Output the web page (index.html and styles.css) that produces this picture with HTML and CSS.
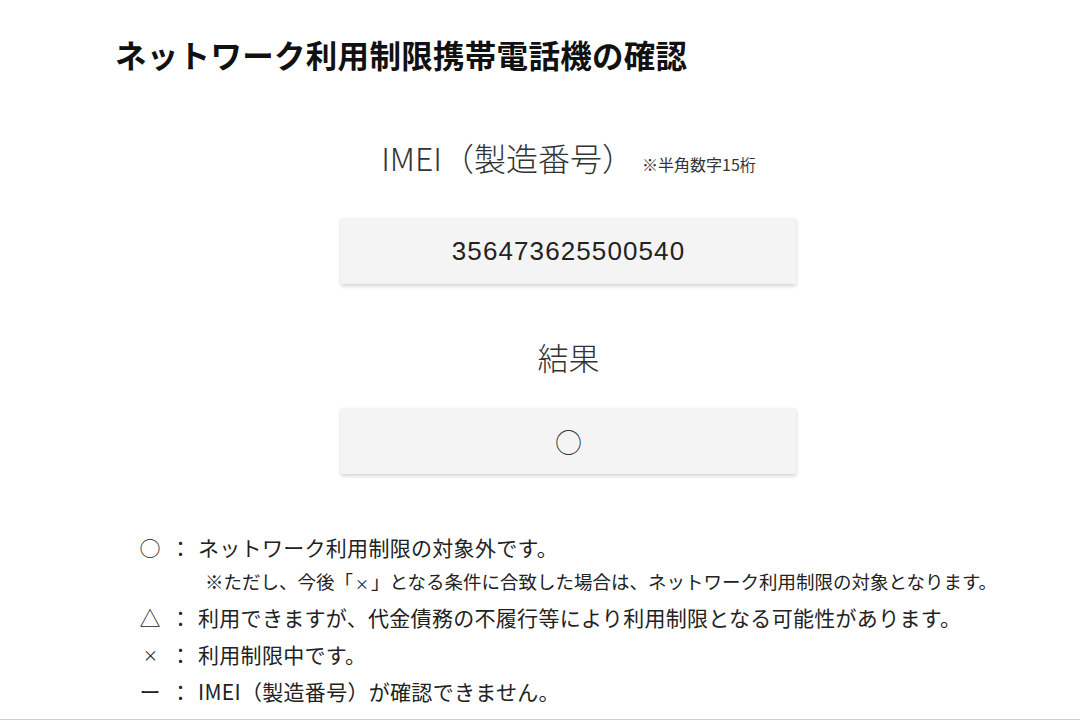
FILE: index.html
```html
<!DOCTYPE html>
<html lang="ja">
<head>
    <meta charset="UTF-8">
    <meta name="viewport" content="width=device-width, initial-scale=1.0">
    <title>ネットワーク利用制限携帯電話機の確認</title>
    <link rel="stylesheet" href="styles.css">
</head>
<body>
<div class="page">
    <h1 class="page-title">ネットワーク利用制限携帯電話機の確認</h1>

    <div class="check-area">
        <h2 class="field-label">IMEI（製造番号）<span class="field-note">※半角数字15桁</span></h2>
        <div class="field-box">356473625500540</div>

        <h2 class="field-label result-label">結果</h2>
        <div class="field-box result-box">○</div>
    </div>

    <ul class="legend">
        <li class="legend-row">
            <span class="legend-mark">○</span>
            <span class="legend-colon">：</span>
            <span class="legend-text">ネットワーク利用制限の対象外です。</span>
        </li>
        <li class="legend-note">※ただし、今後「<span class="small-cross">×</span>」となる条件に合致した場合は、ネットワーク利用制限の対象となります。</li>
        <li class="legend-row">
            <span class="legend-mark">△</span>
            <span class="legend-colon">：</span>
            <span class="legend-text">利用できますが、代金債務の不履行等により利用制限となる可能性があります。</span>
        </li>
        <li class="legend-row">
            <span class="legend-mark legend-mark-small">×</span>
            <span class="legend-colon">：</span>
            <span class="legend-text">利用制限中です。</span>
        </li>
        <li class="legend-row">
            <span class="legend-mark">ー</span>
            <span class="legend-colon">：</span>
            <span class="legend-text">IMEI（製造番号）が確認できません。</span>
        </li>
    </ul>
</div>
<div class="page-rule"></div>
</body>
</html>
```

FILE: styles.css
```css
/* Reset page CSS */
* {
    margin: 0;
    padding: 0;
    box-sizing: border-box;
}

body {
    font-family: "Noto Sans CJK JP", "Noto Sans", sans-serif;
    color: #222;
    background-color: #ffffff;
    overflow: hidden;
}

.page {
    padding: 34px 58px 0 115px;
}

.page-title {
    font-size: 31.5px;
    line-height: 40px;
    font-weight: 700;
    color: #111;
    letter-spacing: 0.3px;
}

.check-area {
    display: flex;
    flex-direction: column;
    align-items: center;
    margin-top: 63px;
}

.field-label {
    font-size: 32px;
    line-height: 40px;
    font-weight: 300;
    color: #333;
    display: flex;
    align-items: baseline;
}

.field-note {
    font-size: 16px;
    font-weight: 400;
    margin-left: 8px;
    color: #333;
}

.field-box {
    width: 455px;
    height: 66px;
    margin-top: 34px;
    background-color: #f5f4f4;
    box-shadow: 0 2px 4px rgba(0, 0, 0, 0.18);
    display: flex;
    justify-content: center;
    align-items: center;
    font-family: "Liberation Sans", Arial, sans-serif;
    font-size: 26px;
    letter-spacing: 1.1px;
    color: #222;
}

.result-label {
    margin-top: 53px;
    font-size: 31px;
}

.result-box {
    margin-top: 31px;
    font-family: "Noto Sans CJK JP", sans-serif;
    font-size: 27px;
    font-weight: 300;
    letter-spacing: 0;
    color: #333;
}

.legend {
    list-style: none;
    margin-top: 55px;
    padding-left: 25px;
    color: #222;
}

.legend-row {
    display: flex;
    font-size: 21px;
    line-height: 37px;
}

.legend-mark {
    width: 30px;
    text-align: center;
    margin-left: -5px;
    margin-right: 5px;
}

.legend-mark-small {
    font-size: 15px;
    text-align: left;
    padding-left: 8px;
}

.legend-colon {
    width: 28px;
}

.legend-text {
    letter-spacing: 0.3px;
}

.legend-note {
    font-size: 18.5px;
    line-height: 31px;
    padding-left: 65px;
}

.small-cross {
    font-size: 14px;
    padding: 0 2px;
}

.page-rule {
    margin-top: 9px;
    border-top: 2px solid #d0d0d0;
}
```
